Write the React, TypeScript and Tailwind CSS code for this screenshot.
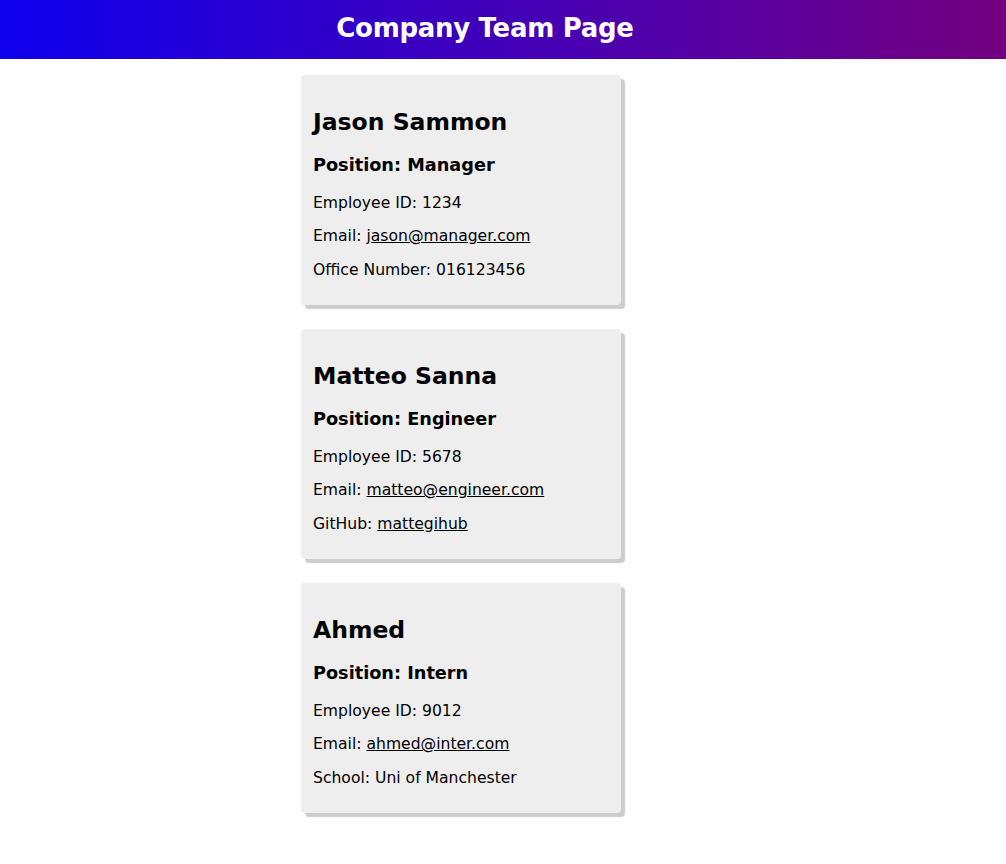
import React from 'react'

type Member = {
    name: string
    role: string
    id: string
    email: string
    extraLabel: string
    extra: string
    extraLink?: boolean
}

const team: Member[] = [
    { name: 'Jason Sammon', role: 'Manager', id: '1234', email: 'jason@manager.com', extraLabel: 'Office Number', extra: '016123456' },
    { name: 'Matteo Sanna', role: 'Engineer', id: '5678', email: 'matteo@engineer.com', extraLabel: 'GitHub', extra: 'mattegihub', extraLink: true },
    { name: 'Ahmed', role: 'Intern', id: '9012', email: 'ahmed@inter.com', extraLabel: 'School', extra: 'Uni of Manchester' },
]

const TeamCard = ({ m }: { m: Member }) => {
    return (
        <div className="bg-[#eeeeee] rounded-[4px] shadow-[4px_4px_1px_#cccccc] px-3 pt-[33px] pb-[25.5px] flex flex-col">
            <h2 className="text-[23.5px] leading-[28px] font-bold">{m.name}</h2>
            <h3 className="mt-[18px] text-[17.7px] leading-[22px] font-bold">Position: {m.role}</h3>
            <p className="mt-[16.5px] text-[15.6px] leading-[20px]">Employee ID: {m.id}</p>
            <p className="mt-[13.5px] text-[15.6px] leading-[20px]">
                Email: <a className="underline" href={`mailto:${m.email}`}>{m.email}</a>
            </p>
            <p className="mt-[13.5px] text-[15.6px] leading-[20px]">
                {m.extraLabel}: {m.extraLink ? <a className="underline" href="#">{m.extra}</a> : m.extra}
            </p>
        </div>
    )
}

const App = () => {
    return (
        <div className="min-h-screen bg-white text-black font-['DejaVu_Sans','Verdana',sans-serif]">
            <header className="h-[59px] flex items-center justify-center pr-[36px] pb-[3px] bg-linear-to-r/srgb from-[#0f00ef] to-[#740081]">
                <h1 className="text-white font-bold text-[26px] tracking-[-0.3px] leading-none">Company Team Page</h1>
            </header>
            <main className="ml-[301px] w-[320px] pt-4 pb-10 flex flex-col gap-6">
                {team.map((m) => (
                    <TeamCard key={m.id} m={m} />
                ))}
            </main>
        </div>
    )
}

export default App
